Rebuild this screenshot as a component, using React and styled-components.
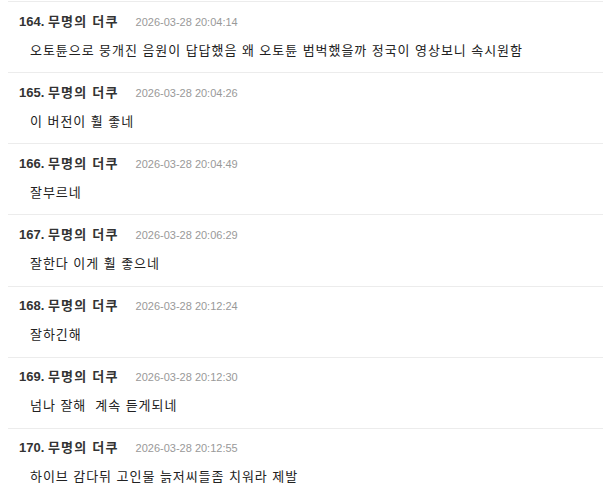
import React from 'react';
import styled, { createGlobalStyle } from 'styled-components';

const GlobalStyle = createGlobalStyle`
  body {
    margin: 0;
    background: #fff;
    font-family: "Liberation Sans", "Noto Sans CJK KR", sans-serif;
  }
`;

const CommentList = styled.ul`
  list-style: none;
  margin: 1px 1px 0 8px;
  padding: 0;
`;

const CommentItem = styled.li`
  border-top: 1px solid #ececec;
  padding: 10.5px 0 11.67px 11px;
`;

const CommentHead = styled.div`
  display: flex;
  align-items: baseline;
  gap: 17px;
  height: 18px;
  line-height: 18px;
`;

const Author = styled.strong`
  font-size: 13px;
  font-weight: bold;
  color: #333;
`;

const Nick = styled.span`
  letter-spacing: 1.2px;
`;

const DateText = styled.span`
  font-size: 11px;
  color: #999;
`;

const Body = styled.p`
  margin: 10px 0 0 11px;
  height: 20px;
  font-size: 13px;
  line-height: 20px;
  letter-spacing: 0.95px;
  color: #222;
  white-space: pre;
`;

const comments = [
  { no: 164, time: '2026-03-28 20:04:14', text: '오토튠으로 뭉개진 음원이 답답했음 왜 오토튠 범벅했을까 정국이 영상보니 속시원함' },
  { no: 165, time: '2026-03-28 20:04:26', text: '이 버전이 훨 좋네' },
  { no: 166, time: '2026-03-28 20:04:49', text: '잘부르네' },
  { no: 167, time: '2026-03-28 20:06:29', text: '잘한다 이게 훨 좋으네' },
  { no: 168, time: '2026-03-28 20:12:24', text: '잘하긴해' },
  { no: 169, time: '2026-03-28 20:12:30', text: '넘나 잘해  계속 듣게되네' },
  { no: 170, time: '2026-03-28 20:12:55', text: '하이브 감다뒤 고인물 늙저씨들좀 치워라 제발' },
];

const App = () => {
  return (
    <>
      <GlobalStyle />
      <CommentList>
        {comments.map((c) => (
          <CommentItem key={c.no}>
            <CommentHead>
              <Author>
                {c.no}. <Nick>무명의 더쿠</Nick>
              </Author>
              <DateText>{c.time}</DateText>
            </CommentHead>
            <Body>{c.text}</Body>
          </CommentItem>
        ))}
      </CommentList>
    </>
  );
};

export default App;
